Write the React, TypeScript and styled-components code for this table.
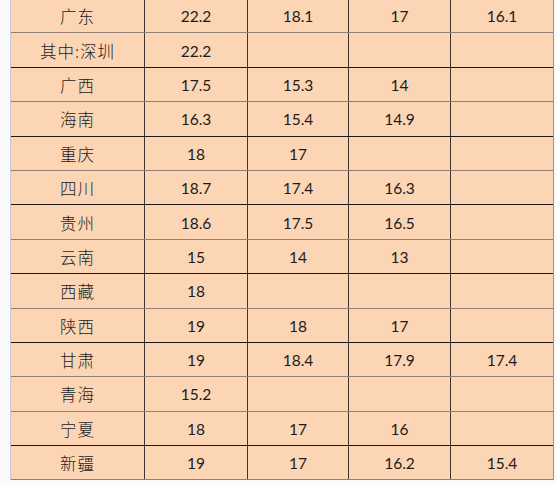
import React from "react";
import styled, { createGlobalStyle } from "styled-components";

const GlobalStyle = createGlobalStyle`
	html, body {
		margin: 0;
		padding: 0;
		background: #fafafa;
	}
	body {
		width: 557px;
		height: 485px;
		overflow: hidden;
	}
`;

type RowData = {
	name: string;
	values: string[];
	line: "gray" | "black";
};

const rows: RowData[] = [
	{ name: "广东", values: ["22.2", "18.1", "17", "16.1"], line: "gray" },
	{ name: "其中:深圳", values: ["22.2", "", "", ""], line: "black" },
	{ name: "广西", values: ["17.5", "15.3", "14", ""], line: "gray" },
	{ name: "海南", values: ["16.3", "15.4", "14.9", ""], line: "black" },
	{ name: "重庆", values: ["18", "17", "", ""], line: "gray" },
	{ name: "四川", values: ["18.7", "17.4", "16.3", ""], line: "black" },
	{ name: "贵州", values: ["18.6", "17.5", "16.5", ""], line: "gray" },
	{ name: "云南", values: ["15", "14", "13", ""], line: "black" },
	{ name: "西藏", values: ["18", "", "", ""], line: "gray" },
	{ name: "陕西", values: ["19", "18", "17", ""], line: "black" },
	{ name: "甘肃", values: ["19", "18.4", "17.9", "17.4"], line: "gray" },
	{ name: "青海", values: ["15.2", "", "", ""], line: "gray" },
	{ name: "宁夏", values: ["18", "17", "16", ""], line: "black" },
	{ name: "新疆", values: ["19", "17", "16.2", "15.4"], line: "gray" },
];

const Page = styled.div`
	padding-left: 10px;
	margin-top: -1px;
`;

const Sheet = styled.div`
	display: flex;
	flex-direction: column;
	width: 542px;
	border-left: 1px solid #c9c6d6;
	border-right: 1px solid #9a928e;
	background: #fcd5b4;
`;

const Row = styled.div<{ $line: "gray" | "black" }>`
	display: grid;
	grid-template-columns: 134px 103px 101px 102px 102px;
	height: 33.4px;
	border-bottom: 1px solid
		${(p) => (p.$line === "black" ? "#1e1a1a" : "#8f7f76")};
`;

const Cell = styled.div<{ $name?: boolean; $last?: boolean }>`
	display: flex;
	align-items: center;
	justify-content: center;
	border-right: ${(p) => (p.$last ? "none" : "1px solid #3d3234")};
	color: #1c1c1c;
	font-family: ${(p) =>
		p.$name
			? `"Noto Sans CJK SC", sans-serif`
			: `"Lato", "Liberation Sans", sans-serif`};
	font-size: ${(p) => (p.$name ? "16.5px" : "15.5px")};
	font-weight: ${(p) => (p.$name ? 300 : 400)};
	letter-spacing: ${(p) => (p.$name ? "1px" : "0")};
	padding-top: 1px;
`;

const App = () => {
	return (
		<>
			<GlobalStyle />
			<Page>
				<Sheet>
					{rows.map((row) => (
						<Row $line={row.line} key={row.name}>
							<Cell $name>{row.name}</Cell>
							{row.values.map((v, i) => (
								<Cell $last={i === 3} key={i}>
									{v}
								</Cell>
							))}
						</Row>
					))}
				</Sheet>
			</Page>
		</>
	);
};

export default App;
